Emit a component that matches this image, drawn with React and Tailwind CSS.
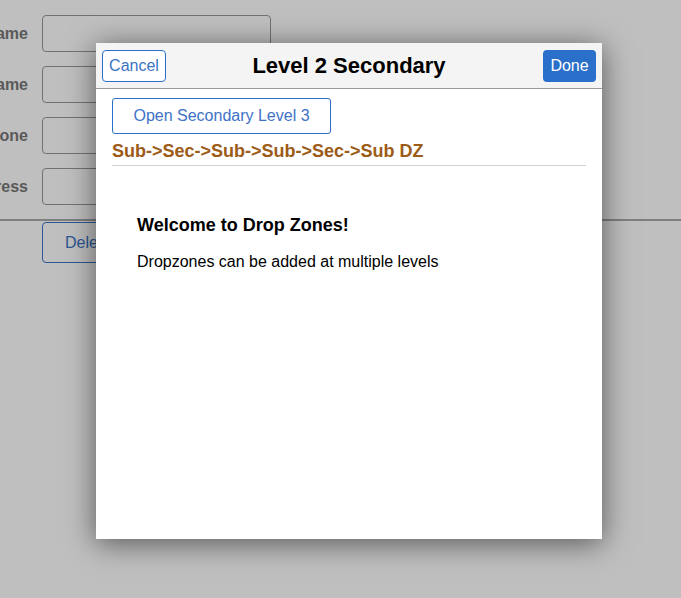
export default function App() {
  const rows = ["First Name", "Last Name", "Phone", "Address"];
  return (
    <div className="relative w-[681px] h-[598px] overflow-hidden bg-white" style={{ fontFamily: '"Liberation Sans", Arial, sans-serif' }}>
      {/* underlying page */}
      <div className="pt-[15px]">
        <div className="flex flex-col gap-[14px]">
          {rows.map((r) => (
            <div key={r} className="flex items-center h-[37px]">
              <div className="w-[28px] flex justify-end">
                <span className="whitespace-nowrap text-[16px] font-bold text-[#777]">{r}</span>
              </div>
              <div className="ml-[14px] w-[229px] h-[37px] border border-[#999] rounded-[4px] bg-white" />
            </div>
          ))}
        </div>
        <div className="mt-[14px] border-t-2 border-[#aaa]" />
        <div className="pl-[42px] pt-[1px]">
          <button className="h-[41px] px-[22px] border border-[#3a74c4] rounded-[4px] text-[#3a74c4] text-[16px] bg-white">Delete</button>
        </div>
      </div>
      {/* overlay */}
      <div className="absolute inset-0 bg-[rgba(0,0,0,0.25)]" />
      {/* modal */}
      <div className="absolute left-[96px] top-[43px] w-[506px] h-[496px] bg-white shadow-[0_4px_28px_rgba(0,0,0,0.55)] flex flex-col">
        <div className="h-[46px] bg-[#f4f4f4] border-b border-[#9a9a9a] grid grid-cols-[1fr_auto_1fr] items-center px-[6px]">
          <div className="flex justify-start">
            <button className="h-[32px] w-[64px] border border-[#2b6fc9] rounded-[4px] bg-white text-[#3a74c4] text-[16px]">Cancel</button>
          </div>
          <div className="text-[22px] font-bold text-black leading-[26px]">Level 2 Secondary</div>
          <div className="flex justify-end">
            <button className="h-[32px] w-[53px] rounded-[4px] bg-[#2a6fc9] text-white text-[16px]">Done</button>
          </div>
        </div>
        <div className="px-[16px] pt-[9px]">
          <button className="h-[36px] w-[219px] border border-[#2b6fc9] rounded-[3px] bg-white text-[#3e72c6] text-[16px]">Open Secondary Level 3</button>
          <div className="mt-[6px] pb-[3px] border-b border-[#d0d0d0] text-[18px] font-bold text-[#9c5b17] leading-[22px]">Sub-&gt;Sec-&gt;Sub-&gt;Sub-&gt;Sec-&gt;Sub DZ</div>
          <div className="pl-[25px] pt-[48px]">
            <div className="text-[18px] font-bold text-black leading-[22px]">Welcome to Drop Zones!</div>
            <div className="mt-[16px] text-[16px] text-black leading-[20px]">Dropzones can be added at multiple levels</div>
          </div>
        </div>
      </div>
    </div>
  );
}
